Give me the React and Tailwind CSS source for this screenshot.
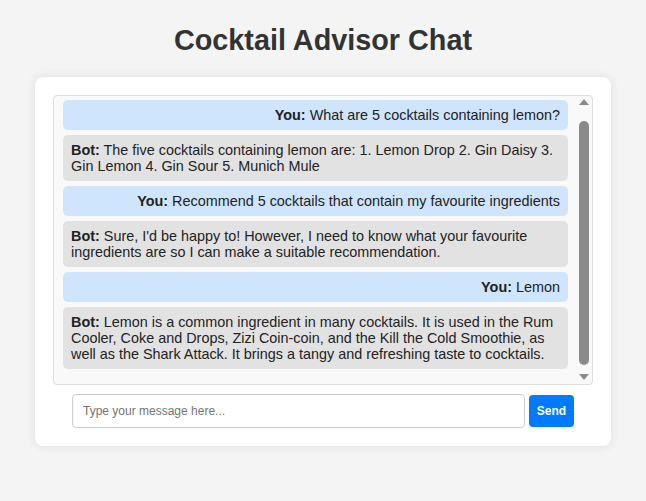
import React, { useEffect, useRef } from "react";

const messages = [
  { from: "You", text: "What are 5 cocktails containing lemon?" },
  { from: "Bot", text: "The five cocktails containing lemon are: 1. Lemon Drop 2. Gin Daisy 3. Gin Lemon 4. Gin Sour 5. Munich Mule" },
  { from: "You", text: "Recommend 5 cocktails that contain my favourite ingredients" },
  { from: "Bot", text: "Sure, I'd be happy to! However, I need to know what your favourite ingredients are so I can make a suitable recommendation." },
  { from: "You", text: "Lemon" },
  { from: "Bot", text: "Lemon is a common ingredient in many cocktails. It is used in the Rum Cooler, Coke and Drops, Zizi Coin-coin, and the Kill the Cold Smoothie, as well as the Shark Attack. It brings a tangy and refreshing taste to cocktails." },
];

export default function App() {
  const boxRef = useRef(null);
  useEffect(() => {
    if (boxRef.current) boxRef.current.scrollTop = boxRef.current.scrollHeight;
  }, []);
  return (
    <div className="min-h-[501px] bg-[#f4f4f4] font-['Liberation_Sans',Arial,sans-serif] text-[#333] pt-[20px]">
      <h1 className="text-center text-[28.8px] font-bold leading-[40px] text-[#333] mb-[17px]">Cocktail Advisor Chat</h1>
      <div className="w-[576px] mx-auto bg-white rounded-[8px] shadow-[0_0_10px_rgba(0,0,0,0.1)] p-[18px]">
        <div className="relative h-[290px] border border-[#ddd] rounded-[4px] bg-[#f9f9f9]">
          <div ref={boxRef} className="h-full overflow-hidden pl-[9px] pr-[24px] py-[10px]">
            {messages.map((m, i) =>
              m.from === "You" ? (
                <div key={i} className="my-[5px] bg-[#cfe5fd] rounded-[5px] px-[8px] py-[7px] text-right text-[14.4px] leading-[16px] text-[#222]">
                  <b>You:</b> {m.text}
                </div>
              ) : (
                <div key={i} className="my-[5px] bg-[#e2e2e2] rounded-[5px] px-[8px] py-[7px] text-left text-[14.4px] leading-[16px] text-[#222]">
                  <b>Bot:</b> {m.text}
                </div>
              )
            )}
          </div>
          <div className="absolute right-0 top-0 bottom-0 w-[15px]">
            <div className="absolute top-[3px] left-[2px] w-0 h-0 border-l-[5px] border-r-[5px] border-b-[6px] border-l-transparent border-r-transparent border-b-[#8a8a8a]" />
            <div className="absolute top-[25px] bottom-[19px] left-[2px] w-[10px] rounded-full bg-[#8a8a8a]" />
            <div className="absolute bottom-[4px] left-[2px] w-0 h-0 border-l-[5px] border-r-[5px] border-t-[6px] border-l-transparent border-r-transparent border-t-[#8a8a8a]" />
          </div>
        </div>
        <div className="flex items-center gap-[4px] px-[19px] mt-[9px]">
          <input
            type="text"
            placeholder="Type your message here..."
            className="flex-1 h-[34px] border border-[#ccc] rounded-[4px] px-[10px] text-[12px] bg-white outline-none placeholder:text-[#757575]"
          />
          <button className="w-[45px] h-[32px] bg-[#007bff] text-white text-[12px] font-bold rounded-[4px]">Send</button>
        </div>
      </div>
    </div>
  );
}
